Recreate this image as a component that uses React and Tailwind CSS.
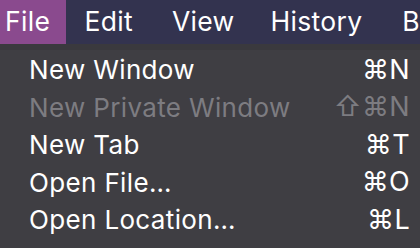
import React from "react";

const items = [
  { label: "New Window", keys: "⌘N" },
  { label: "New Private Window", keys: "⇧⌘N", disabled: true },
  { label: "New Tab", keys: "⌘T" },
  { label: "Open File…", keys: "⌘O" },
  { label: "Open Location…", keys: "⌘L" },
];

export default function App() {
  return (
    <div
      className="w-[420px] h-[248px] overflow-hidden bg-[#3f3e43] text-white"
      style={{ fontFamily: "Inter, 'DejaVu Sans', sans-serif" }}
    >
      <div className="flex h-[44px] bg-[#33334f] text-[26.5px] tracking-[0.3px] items-center whitespace-nowrap">
        <div className="h-full w-[68px] bg-[#8a4a8e] flex items-center pl-[5px]">File</div>
        <div className="pl-[19px]">Edit</div>
        <div className="pl-[39px]">View</div>
        <div className="pl-[36px]">History</div>
        <div className="pl-[40px]">B</div>
      </div>
      <div className="h-[6px] bg-[#3a393e]" />
      <div className="flex flex-col pt-[1px]">
        {items.map((it) => (
          <div
            key={it.label}
            className={`flex items-center justify-between h-[37.5px] pl-[29px] pr-[10px] text-[26px] tracking-[0.35px] ${
              it.disabled ? "text-[#7d7c81]" : "text-white"
            }`}
          >
            <span>{it.label}</span>
            <span className="text-[27px]">{it.keys}</span>
          </div>
        ))}
      </div>
    </div>
  );
}
